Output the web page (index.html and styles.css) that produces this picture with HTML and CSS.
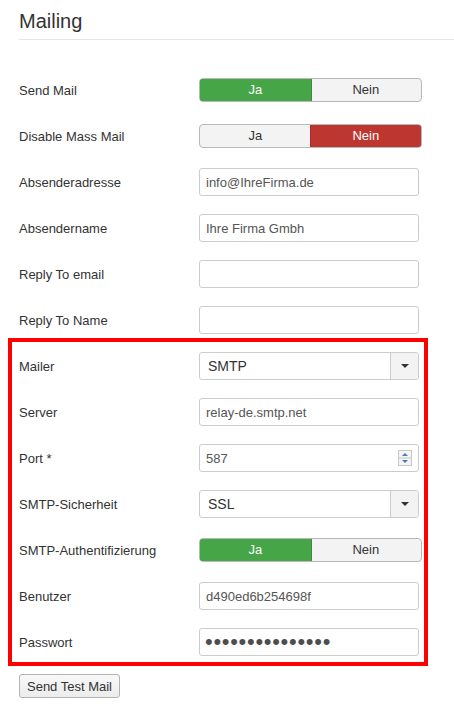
FILE: index.html
```html
<!DOCTYPE html>
<html lang="de">
<head>
    <meta charset="UTF-8">
    <meta name="viewport" content="width=device-width, initial-scale=1.0">
    <title>Mailing</title>
    <link rel="stylesheet" href="styles.css">
</head>
<body>
    <h2 class="page-title">Mailing</h2>

    <div class="form">
        <div class="row">
            <label>Send Mail</label>
            <div class="toggle">
                <span class="yes on">Ja</span>
                <span>Nein</span>
            </div>
        </div>
        <div class="row">
            <label>Disable Mass Mail</label>
            <div class="toggle">
                <span>Ja</span>
                <span class="no on">Nein</span>
            </div>
        </div>
        <div class="row">
            <label>Absenderadresse</label>
            <input type="text" value="info@IhreFirma.de">
        </div>
        <div class="row">
            <label>Absendername</label>
            <input type="text" value="Ihre Firma Gmbh">
        </div>
        <div class="row">
            <label>Reply To email</label>
            <input type="text" value="">
        </div>
        <div class="row">
            <label>Reply To Name</label>
            <input type="text" value="">
        </div>

        <!-- SMTP settings -->
        <div class="smtp-box">
            <div class="row">
                <label>Mailer</label>
                <div class="select">
                    <span class="select-value">SMTP</span>
                    <span class="select-arrow"><i class="caret"></i></span>
                </div>
            </div>
            <div class="row">
                <label>Server</label>
                <input type="text" value="relay-de.smtp.net">
            </div>
            <div class="row">
                <label>Port *</label>
                <div class="number">
                    <input type="text" value="587">
                    <svg class="spin" width="14" height="16" viewBox="0 0 14 16">
                        <rect x="0.5" y="0.5" width="13" height="15" fill="#f4f4f4" stroke="#c8c8c8"/>
                        <line x1="1" y1="8" x2="13" y2="8" stroke="#c8c8c8"/>
                        <path d="M4 6 L7 3 L10 6 Z" fill="#4a78c2"/>
                        <path d="M4 10 L7 13 L10 10 Z" fill="#4a78c2"/>
                    </svg>
                </div>
            </div>
            <div class="row">
                <label>SMTP-Sicherheit</label>
                <div class="select">
                    <span class="select-value">SSL</span>
                    <span class="select-arrow"><i class="caret"></i></span>
                </div>
            </div>
            <div class="row">
                <label>SMTP-Authentifizierung</label>
                <div class="toggle">
                    <span class="yes on">Ja</span>
                    <span>Nein</span>
                </div>
            </div>
            <div class="row">
                <label>Benutzer</label>
                <input type="text" value="d490ed6b254698f">
            </div>
            <div class="row">
                <label>Passwort</label>
                <input type="password" class="password" value="xxxxxxxxxxxxxxx">
            </div>
        </div>
    </div>

    <button class="btn">Send Test Mail</button>
</body>
</html>
```

FILE: styles.css
```css
body {
    margin: 0;
    padding: 0 0 0 19px;
    background-color: #ffffff;
    font-family: "Liberation Sans", Arial, sans-serif;
    font-size: 13px;
    color: #333;
}

.page-title {
    margin: 0;
    padding: 9px 0 6px;
    font-size: 20px;
    line-height: 24px;
    font-weight: normal;
    color: #333;
    border-bottom: 1px solid #e5e5e5;
}

.form {
    display: flex;
    flex-direction: column;
    gap: 18px;
    margin-top: 36px;
}

.row {
    display: flex;
    align-items: center;
    height: 28px;
}

.row label {
    width: 180px;
    flex: none;
}

input {
    width: 220px;
    height: 28px;
    box-sizing: border-box;
    margin: 0;
    padding: 0 6px;
    border: 1px solid #ccc;
    border-radius: 3px;
    font-family: inherit;
    font-size: 13px;
    color: #555;
    background: #fff;
    outline: none;
}

.password {
    font-size: 22px;
    letter-spacing: 0.7px;
    padding-left: 5px;
    color: #4d4d4d;
}

/* Yes / No switch */
.toggle {
    display: flex;
    width: 223px;
    height: 24px;
    box-sizing: border-box;
    border: 1px solid #b8b8b8;
    border-radius: 4px;
    overflow: hidden;
    background: #f3f3f3;
}

.toggle span {
    flex: 1;
    text-align: center;
    line-height: 22px;
    color: #333;
}

.toggle .yes.on {
    background: #46a546;
    color: #fff;
    box-shadow: 0 0 0 1px #3b8f3b;
}

.toggle .no.on {
    background: #bd362f;
    color: #fff;
    box-shadow: 0 0 0 1px #a8302a;
}

/* Dropdown */
.select {
    display: flex;
    width: 220px;
    height: 28px;
    box-sizing: border-box;
    border: 1px solid #ccc;
    border-radius: 3px;
    overflow: hidden;
}

.select-value {
    flex: 1;
    padding-left: 8px;
    line-height: 26px;
    font-size: 14px;
    color: #333;
}

.select-arrow {
    width: 27px;
    border-left: 1px solid #ccc;
    background: #f3f3f3;
    display: flex;
    align-items: center;
    justify-content: center;
}

.caret {
    width: 0;
    height: 0;
    border-left: 4px solid transparent;
    border-right: 4px solid transparent;
    border-top: 4px solid #333;
}

/* Number field with spinner */
.number {
    position: relative;
}

.spin {
    position: absolute;
    right: 7px;
    top: 6px;
}

/* Red frame around the SMTP block */
.smtp-box {
    display: flex;
    flex-direction: column;
    gap: 18px;
    width: 420px;
    box-sizing: border-box;
    margin: -14px 0 0 -11px;
    padding: 10px 0 6px 7px;
    border: 4px solid #ff0000;
}

.btn {
    display: block;
    margin-top: 8px;
    width: 101px;
    height: 24px;
    padding: 0;
    border: 1px solid #b3b3b3;
    border-radius: 3px;
    background: linear-gradient(#f8f8f8, #ececec);
    font-family: inherit;
    font-size: 13px;
    color: #333;
}
```
